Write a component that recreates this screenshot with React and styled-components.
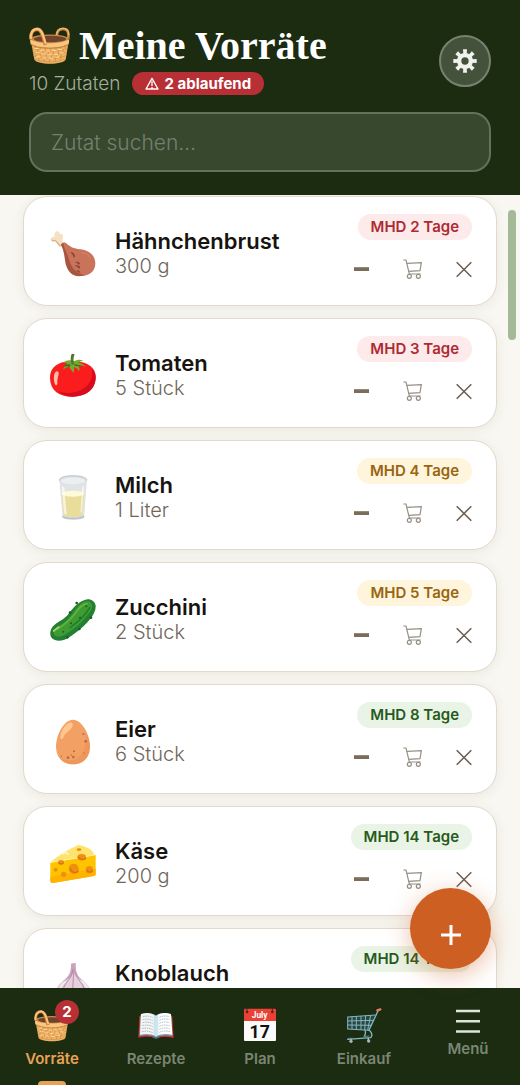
import { useState } from "react";
import styled, { createGlobalStyle } from "styled-components";

const items = [
  { name: "Hähnchenbrust", amount: "300 g", days: 2, level: "danger", icon: <Drumstick /> },
  { name: "Tomaten", amount: "5 Stück", days: 3, level: "danger", icon: <Tomato /> },
  { name: "Milch", amount: "1 Liter", days: 4, level: "warn", icon: <Milk /> },
  { name: "Zucchini", amount: "2 Stück", days: 5, level: "warn", icon: <Zucchini /> },
  { name: "Eier", amount: "6 Stück", days: 8, level: "ok", icon: <Egg /> },
  { name: "Käse", amount: "200 g", days: 14, level: "ok", icon: <Cheese /> },
  { name: "Knoblauch", amount: "3 Stück", days: 14, level: "ok", icon: <Garlic /> },
];

const tabs = [
  { label: "Vorräte", icon: <Basket width={36} height={36} />, badge: 2 },
  { label: "Rezepte", icon: <Book /> },
  { label: "Plan", icon: <Calendar /> },
  { label: "Einkauf", icon: <ShoppingCart /> },
  { label: "Menü", icon: <Burger />, small: true },
];

const levels = {
  danger: { color: "#ae2a33", background: "#fdeaea" },
  warn: { color: "#9a6410", background: "#fef5dc" },
  ok: { color: "#265a1c", background: "#e9f4e6" },
};

export default function App() {
  const [search, setSearch] = useState("");
  const [active, setActive] = useState("Vorräte");
  const visible = items.filter((item) =>
    item.name.toLowerCase().includes(search.toLowerCase())
  );

  return (
    <>
      <GlobalStyle />
      <Page>
        <Header>
          <HeaderTop>
            <div>
              <Title>
                <Basket width={42} height={38} />
                Meine Vorräte
              </Title>
              <Summary>
                10 Zutaten
                <Expiring>
                  <Warning />2 ablaufend
                </Expiring>
              </Summary>
            </div>
            <SettingsButton aria-label="Einstellungen">
              <Gear />
            </SettingsButton>
          </HeaderTop>
          <Search
            type="text"
            aria-label="Zutat suchen"
            placeholder="Zutat suchen…"
            value={search}
            onChange={(e) => setSearch(e.target.value)}
          />
        </Header>

        <Content>
          <List>
            {visible.map((item) => (
              <Item key={item.name} {...item} />
            ))}
          </List>
          <ScrollThumb />
          <AddButton aria-label="Zutat hinzufügen">
            <svg width="22" height="22" viewBox="0 0 22 22" stroke="#fff" strokeWidth="3">
              <path d="M11 1v20M1 11h20" />
            </svg>
          </AddButton>
        </Content>

        <Nav>
          {tabs.map((tab) => (
            <Tab
              key={tab.label}
              $active={active === tab.label}
              onClick={() => setActive(tab.label)}
            >
              <TabIcon $small={tab.small}>
                {tab.icon}
                {tab.badge && <Count>{tab.badge}</Count>}
              </TabIcon>
              {tab.label}
            </Tab>
          ))}
        </Nav>
      </Page>
    </>
  );
}

function Item({ name, amount, days, level, icon }) {
  return (
    <Card>
      {icon}
      <Info>
        <Name>{name}</Name>
        <Amount>{amount}</Amount>
      </Info>
      <Side>
        <Expiry $level={level}>MHD {days} Tage</Expiry>
        <Actions>
          <IconButton aria-label="Weniger">
            <svg width="15" height="20" viewBox="0 0 15 20">
              <path d="M0 8.2h15v3.8H0z" fill="#7b6c5c" />
            </svg>
          </IconButton>
          <IconButton aria-label="Auf die Einkaufsliste">
            <CartOutline />
          </IconButton>
          <IconButton aria-label="Entfernen">
            <svg width="16" height="20" viewBox="0 0 16 20" stroke="#6b5d50" strokeWidth="1.5">
              <path d="M.7 3.2l14.6 14.6M15.3 3.2L.7 17.8" />
            </svg>
          </IconButton>
        </Actions>
      </Side>
    </Card>
  );
}

function Emoji({ children }) {
  return (
    <svg width="48" height="48" viewBox="0 -1 144 144" fill="none" aria-hidden="true">
      {children}
    </svg>
  );
}

function Drumstick() {
  return (
    <Emoji>
      <path d="M34 52L18 35C9 39 2 32 7 26c2-3 6-4 10-2-2-8 0-18 8-18 6 0 8 5 7 9 6-3 12 2 10 9-1 5-4 8-2 12l9 9z" fill="#f6dfc2" />
      <path d="M7 29c2 4 8 4 12 2l17 18-3 4-15-18c-7 3-12 0-11-6z" fill="#d8b48c" />
      <path d="M36 46c4-6 9-8 15-5 12 12 24 17 42 19 30 3 46 20 46 42 0 23-17 38-42 38-20 0-34-14-41-34-6-20-6-38-20-60z" fill="#c9745a" />
      <path d="M36 46c2-3 4-5 7-6 1 16 11 29 16 47 7 28 21 44 48 51-34 9-49-8-57-34-4-18-3-36-14-58z" fill="#a8543f" />
      <path d="M65 70c5-4 14 5 13 12l-4 3c-1-7-5-11-9-15zm12 39c6-3 15-1 17 5l-3 4c-4-5-9-7-14-9zm5 14c6-2 12 2 12 8-5-1-9-4-12-8zm12-21c-4-5-10-6-16-4 4 1 8 5 11 9z" fill="#8d4534" />
      <path d="M99 70c12 1 22 8 25 18" stroke="#d8876a" strokeWidth="5" strokeLinecap="round" opacity=".5" />
    </Emoji>
  );
}

function Tomato() {
  return (
    <Emoji>
      <path d="M3 79c0-33 27-51 68-48 43-2 69 16 69 47 0 37-29 58-70 58S3 116 3 79z" fill="#fb1d1d" />
      <path d="M127 51c12 30-13 66-52 72-17 3-35 2-48-4 12 12 28 17 44 17 40 0 69-22 69-58 0-11-4-20-13-27z" fill="#d60b1d" />
      <path d="M15 74c1-12 9-17 13-12 4 6-4 15-3 34 0 6-5 8-7 3-3-7-4-16-3-25z" fill="#ffc0a8" />
      <path d="M65 27c-7-1-16 1-22 7 5 0 10 1 14 4-8 2-13 8-14 17 6-6 12-9 18-8 3 6 8 12 13 18 1-7 2-12 1-18 7 2 12 6 15 13 3-7 1-12-3-18 8 0 15 1 22 5-3-8-12-13-22-13 4-3 10-5 16-5-8-5-17-5-27 1z" fill="#72ad32" />
      <path d="M65 40c-8-2-15-1-22 7 8-3 15-3 19 0zm10-1c8-1 17 1 24 8-9-3-16-4-21-3z" fill="#406f22" />
      <path d="M68 40c-4-14-4-27 1-33l8 2c-4 8-5 19-1 30z" fill="#54752d" />
    </Emoji>
  );
}

function Milk() {
  return (
    <Emoji>
      <ellipse cx="73" cy="131" rx="34" ry="8" fill="#c5ced2" />
      <path d="M31 20l9 104c1 14 64 15 66 0l8-104z" fill="#e0e4e6" />
      <path d="M38 61l6 61c4 13 54 13 57 0l5-61z" fill="#e9dd9c" />
      <ellipse cx="72" cy="61" rx="34" ry="9" fill="#fff9d8" />
      <ellipse cx="72" cy="21" rx="41" ry="14" fill="#d5dade" />
      <ellipse cx="72" cy="23" rx="37" ry="11" fill="#eceff1" />
      <path d="M31 21c0-9 17-14 41-14s42 5 42 14" stroke="#a9b1b6" strokeWidth="2" />
      <path d="M38 39l7 77c0 6 5 8 8 8l-7-82z" fill="#fff" opacity=".65" />
      <path d="M102 39l-5 78" stroke="#fff" strokeWidth="5" opacity=".6" />
      <path d="M41 127c8 10 55 11 64-1" stroke="#9eabb2" strokeWidth="2" />
    </Emoji>
  );
}

function Zucchini() {
  return (
    <Emoji>
      <path d="M107 14c14-6 31 2 33 17 1 15-7 29-19 43-17 21-35 34-59 51-16 12-41 16-53 4-10-11-5-30 7-40 15-13 30-17 43-34 15-19 27-34 48-41z" fill="#238032" />
      <path d="M105 20c12-6 23 0 24 9 2 14-12 29-26 45-14 17-32 28-52 42-14 9-29 10-35 3-6-8 1-19 14-27 20-11 34-27 45-43 8-13 18-24 30-29z" fill="#3e9c32" />
      <path d="M114 25c-20 2-28 21-42 37-13 16-27 26-45 39" stroke="#68b03f" strokeWidth="5" strokeLinecap="round" />
      <path d="M122 37c-10 18-34 43-59 60" stroke="#247c2a" strokeWidth="5" strokeLinecap="round" />
      <path d="M14 107l15-12" stroke="#a2d76a" strokeWidth="5" strokeLinecap="round" />
      <g fill="#185f26">
        <circle cx="83" cy="23" r="4" />
        <circle cx="63" cy="52" r="4" />
        <circle cx="126" cy="67" r="4" />
        <circle cx="91" cy="101" r="4" />
        <circle cx="55" cy="126" r="4" />
        <circle cx="112" cy="33" r="3" />
        <circle cx="93" cy="67" r="3" />
        <circle cx="66" cy="84" r="3" />
        <circle cx="43" cy="109" r="3" />
      </g>
    </Emoji>
  );
}

function Egg() {
  return (
    <Emoji>
      <path d="M72 7c27 0 51 46 51 80 0 34-20 54-51 54s-51-20-51-54C21 53 45 7 72 7z" fill="#f2a063" />
      <path d="M106 41c13 42-4 83-38 88-15 2-28-2-37-10 8 15 23 22 41 22 31 0 51-20 51-54 0-15-6-32-17-46z" fill="#e98c53" opacity=".45" />
      <path d="M34 62c0-18 14-43 28-46 9-2 12 6 7 14-7 12-19 15-25 28-2 6-9 10-10 4z" fill="#ffc78f" />
      <g fill="#bc684e">
        <circle cx="103" cy="50" r="3" />
        <circle cx="110" cy="72" r="4" />
        <circle cx="75" cy="102" r="3" />
        <circle cx="105" cy="107" r="2" />
        <circle cx="57" cy="121" r="4" />
        <circle cx="73" cy="119" r="4" />
        <circle cx="67" cy="113" r="2" />
        <circle cx="37" cy="117" r="2" />
      </g>
    </Emoji>
  );
}

function Cheese() {
  return (
    <Emoji>
      <path d="M4 68c25-20 52-37 84-51 23 4 42 12 48 30z" fill="#ffe36d" />
      <path d="M4 70l136-23v58c0 3-2 4-5 5L12 131c-5 0-8-2-8-7z" fill="#ffc400" />
      <path d="M4 112l136-24v17c0 3-2 4-5 5L12 131c-5 0-8-2-8-7z" fill="#ffb300" />
      <path d="M4 69l132-22" stroke="#fff09a" strokeWidth="3" />
      <g fill="#ef8f12">
        <ellipse cx="98" cy="54" rx="13" ry="10" />
        <circle cx="74" cy="88" r="15" />
        <circle cx="121" cy="91" r="11" />
        <circle cx="44" cy="105" r="8" />
        <circle cx="20" cy="91" r="6" />
        <ellipse cx="36" cy="69" rx="9" ry="7" />
        <ellipse cx="90" cy="31" rx="7" ry="4" />
      </g>
      <path d="M88 53c4 8 17 10 23 3M64 86c1 14 17 19 25 8M113 91c3 9 14 10 18 2M29 70c3 5 11 5 15 0" stroke="#db7311" strokeWidth="4" />
      <path d="M41 45c7-7 13-7 17 1" stroke="#fff6c5" strokeWidth="5" />
    </Emoji>
  );
}

function Garlic() {
  return (
    <Emoji>
      <path d="M66 7l14-2c-1 29 4 41 25 55 24 17 30 57-1 73-19 10-48 10-66 0-29-17-21-58 3-74 20-13 26-27 25-52z" fill="#e5d1de" />
      <path d="M66 7l14-2c-1 29 4 41 25 55-20-8-27-17-31-31-5 17-14 26-33 31 20-14 26-28 25-53z" fill="#c9a3bd" />
      <path d="M71 24c-1 33-24 34-30 66M75 24c-3 35-5 60-2 110M79 33c5 25 25 30 29 61" stroke="#b58aa8" strokeWidth="3" />
      <path d="M50 61c-19 12-25 30-15 58M96 58c21 14 26 35 16 61" stroke="#fff" strokeWidth="5" opacity=".6" />
    </Emoji>
  );
}

function Basket({ width, height }) {
  return (
    <svg width={width} height={height} viewBox="0 0 120 108" fill="none" aria-hidden="true">
      <path d="M80 28c-2-15 5-23 17-23 14 0 18 10 15 28" stroke="#d18b43" strokeWidth="8" />
      <path d="M79 26c-1-14 5-23 18-23 11 0 17 7 16 20" stroke="#f3bd72" strokeWidth="3" />
      <ellipse cx="59" cy="34" rx="54" ry="13" fill="#c98a4a" />
      <ellipse cx="60" cy="34" rx="46" ry="9" fill="#6f432c" />
      <path d="M5 36c20 14 89 14 109 0l-9 56c-4 17-86 17-90 0z" fill="#f0b365" />
      <path d="M3 34c17 16 95 16 112 0l-1 13c-18 15-93 15-110 0z" fill="#f8c67c" />
      <path d="M5 49c23 15 85 15 108 0" stroke="#c58444" strokeWidth="3" />
      <path d="M8 59c24 13 80 13 103 0M10 70c25 13 74 13 99 0M12 81c24 12 71 12 95 0M15 91c22 11 67 11 88 0" stroke="#cf8b45" strokeWidth="2" />
      <path d="M18 53v9m14-5v9m15-7v9m15-9v9m15-10v9m14-12v9m12-13v9M25 65v9m15-7v9m15-7v9m15-9v9m14-10v9m13-13v9M20 75v9m14-6v9m15-6v9m15-9v9m14-10v9m14-12v9M28 87v9m15-7v9m16-8v9m16-11v9m14-13v9" stroke="#c58444" strokeWidth="2" />
      <path d="M15 61h12m3 5h14m4 2h13m4-1h14m4-3h12M18 73h12m4 4h13m5 2h13m5-1h13m5-4h11M21 85h12m5 3h13m5 1h14m5-3h12" stroke="#ffd995" strokeWidth="3" />
      <path d="M7 36C3 18 10 6 25 6c15 3 15 26 22 45" stroke="#c67f3c" strokeWidth="10" />
      <path d="M5 34C3 17 11 5 25 5c15 3 16 25 23 43" stroke="#ffc57c" strokeWidth="6" />
    </svg>
  );
}

function Book() {
  return (
    <svg width="36" height="36" viewBox="0 0 108 108" fill="none" aria-hidden="true">
      <path d="M4 25L1 89c17-3 34-4 53 2 19-6 36-5 53-1l-4-65z" fill="#c62f35" />
      <path d="M8 20L4 84c20-4 36-2 50 4 14-6 31-8 50-3l-5-65c-19-8-35-5-45 3-14-8-30-10-46-3z" fill="#7c9fb1" />
      <path d="M9 18L6 80c20-4 36-2 48 5V24C42 14 27 12 9 18z" fill="#f2f5f4" />
      <path d="M99 18l4 62c-20-4-37-2-49 5V24c11-10 28-12 45-6z" fill="#fff" />
      <path d="M47 18l7 6 7-6v62l-7 7-7-7z" fill="#b9dce9" opacity=".7" />
      <path d="M15 26c11-3 20-2 29 3M14 35c11-3 20-2 30 3M14 44c11-3 20-2 30 3M13 53c11-3 21-2 31 3M12 62c12-3 22-2 32 3M12 71c12-3 22-2 32 3M64 28c10-5 19-5 29-2M64 37c10-5 20-5 30-2M64 46c10-5 20-5 30-2M64 55c10-5 20-5 31-2M64 64c10-5 20-5 31-2M64 73c10-5 21-5 32-2" stroke="#94a3a8" strokeWidth="2" strokeDasharray="5 2" />
      <path d="M45 86c3 5 15 5 18 0" stroke="#437689" strokeWidth="5" />
    </svg>
  );
}

function Calendar() {
  return (
    <svg width="36" height="36" viewBox="0 0 108 108" aria-hidden="true">
      <path d="M6 38h96v58q0 3-3 3H9q-3 0-3-3z" fill="#fafafa" />
      <path d="M9 2h90q3 0 3 3v34H6V5q0-3 3-3z" fill="#eb4034" />
      <path d="M15 0v14M91 0v14" stroke="#482a24" strokeWidth="3" />
      <circle cx="15" cy="12" r="4" fill="#482a24" />
      <circle cx="91" cy="12" r="4" fill="#482a24" />
      <text x="53" y="29" fill="#fff" textAnchor="middle" fontFamily="Roboto" fontSize="25" fontWeight="700">
        July
      </text>
      <text x="53" y="89" fill="#111" textAnchor="middle" fontFamily="Roboto" fontSize="53" fontWeight="700">
        17
      </text>
    </svg>
  );
}

function ShoppingCart() {
  return (
    <svg width="36" height="36" viewBox="0 0 108 108" fill="none" aria-hidden="true">
      <path d="M6 27l80-5-17 45L6 63z" fill="#2b4540" />
      <path d="M5 27l83-6M5 39l78-2M5 51l73 1M5 63l65 4M5 26v38M18 26v38M31 25v39M45 24v41M59 23l-3 43M74 22l-9 44" stroke="#82b8c1" strokeWidth="3" />
      <path d="M97 7L68 68M57 66c3 9 1 15-3 20M69 66c9 8 11 17 5 23L3 94" stroke="#82b8c1" strokeWidth="4" />
      <path d="M6 91h15M53 86l17-2" stroke="#5d8791" strokeWidth="3" />
      <path d="M94 7l9-3" stroke="#ef7860" strokeWidth="7" strokeLinecap="round" />
      <path d="M15 92v8M67 90v8" stroke="#b1c8ca" strokeWidth="4" />
      <circle cx="15" cy="100" r="5" fill="#a6b7b9" />
      <circle cx="68" cy="99" r="5" fill="#a6b7b9" />
    </svg>
  );
}

function Burger() {
  return (
    <svg width="24" height="26" viewBox="0 0 24 26" stroke="#dee5d9" strokeWidth="2.6" aria-hidden="true">
      <path d="M0 3h24M0 13.2h24M0 23.5h24" />
    </svg>
  );
}

function CartOutline() {
  return (
    <svg width="19" height="20" viewBox="0 0 57 60" fill="none" stroke="#958e84" strokeWidth="3.5" aria-hidden="true">
      <path d="M1 3h8l10 42h34M12 13l43-2-4 24-34 2" />
      <circle cx="19" cy="52" r="6" />
      <circle cx="46" cy="52" r="6" />
    </svg>
  );
}

function Gear() {
  return (
    <svg width="24" height="24" viewBox="-36 -36 72 72" aria-hidden="true">
      <circle r="17.5" fill="none" stroke="#f0f3ed" strokeWidth="13" />
      {[0, 45, 90, 135, 180, 225, 270, 315].map((angle) => (
        <path key={angle} d="M-6-35H6l-1 14H-5z" fill="#f0f3ed" transform={`rotate(${angle})`} />
      ))}
    </svg>
  );
}

function Warning() {
  return (
    <svg width="14" height="13" viewBox="0 0 42 39" fill="none" stroke="#fff" strokeWidth="4" aria-hidden="true">
      <path d="M21 4L3 36h36zM21 13v14M21 30v4" strokeLinejoin="round" />
    </svg>
  );
}

const GlobalStyle = createGlobalStyle`
  * {
    box-sizing: border-box;
  }
  body {
    margin: 0;
    background-color: #f8f7f1;
    font-family: Inter, "Liberation Sans", sans-serif;
  }
  button {
    padding: 0;
    border: none;
    background: none;
    font-family: inherit;
    cursor: pointer;
  }
  svg {
    display: block;
    flex-shrink: 0;
  }
`;

const Page = styled.div`
  height: 100vh;
  display: flex;
  flex-direction: column;
`;

const Header = styled.header`
  display: flex;
  flex-direction: column;
  gap: 14px;
  padding: 23px 29px;
  background-color: #1b2c11;
`;

const HeaderTop = styled.div`
  display: flex;
  justify-content: space-between;
  align-items: center;
`;

const Title = styled.h1`
  display: flex;
  align-items: center;
  gap: 8px;
  margin: 0;
  font-family: "Liberation Serif", serif;
  font-size: 40px;
  line-height: 46px;
  font-weight: 700;
  color: white;
`;

const Summary = styled.div`
  display: flex;
  align-items: center;
  gap: 12px;
  font-size: 19px;
  line-height: 29px;
  font-weight: 300;
  color: #a5ae9f;
`;

const Expiring = styled.span`
  display: flex;
  align-items: center;
  gap: 5px;
  padding: 0 13px;
  border-radius: 12px;
  background-color: #b82f35;
  font-size: 15px;
  line-height: 23px;
  font-weight: 700;
  color: white;
`;

const SettingsButton = styled.button`
  width: 52px;
  height: 52px;
  display: flex;
  justify-content: center;
  align-items: center;
  border: 2px solid #768270;
  border-radius: 50%;
  background-color: #44523c;
`;

const Search = styled.input`
  width: 100%;
  height: 60px;
  padding: 0 20px;
  border: 2px solid #63725b;
  border-radius: 18px;
  outline: none;
  background-color: #38482f;
  font-family: inherit;
  font-size: 21px;
  font-weight: 300;
  color: white;

  &::placeholder {
    color: #74806e;
  }
`;

const Content = styled.main`
  flex: 1;
  min-height: 0;
  position: relative;
`;

const List = styled.div`
  height: 100%;
  display: flex;
  flex-direction: column;
  gap: 12px;
  padding: 1px 23px 0;
  overflow-y: auto;
  scrollbar-width: none;
`;

const Card = styled.article`
  display: flex;
  align-items: center;
  flex-shrink: 0;
  gap: 18px;
  height: 110px;
  padding: 17px 24px 14px 25px;
  border: 1px solid #e3d8ce;
  border-radius: 24px;
  background-color: white;
  box-shadow: 0 2px 12px rgba(60, 45, 20, 0.08);
`;

const Info = styled.div`
  flex: 1;
  min-width: 0;
`;

const Name = styled.div`
  font-size: 22px;
  line-height: 26px;
  font-weight: 600;
  color: #171410;
`;

const Amount = styled.div`
  font-size: 20px;
  line-height: 24px;
  font-weight: 300;
  color: #71665a;
`;

const Side = styled.div`
  align-self: flex-start;
  display: flex;
  flex-direction: column;
  align-items: flex-end;
  gap: 19px;
`;

const Expiry = styled.span`
  padding: 0 13px;
  border-radius: 13px;
  background-color: ${(props) => levels[props.$level].background};
  font-size: 15px;
  line-height: 26px;
  font-weight: 600;
  color: ${(props) => levels[props.$level].color};
`;

const Actions = styled.div`
  display: flex;
  gap: 34px;
`;

const IconButton = styled.button`
  display: flex;
  align-items: center;
`;

const ScrollThumb = styled.div`
  position: absolute;
  top: 15px;
  right: 4px;
  width: 8px;
  height: 130px;
  border-radius: 4px;
  background-color: #a3b998;
`;

const AddButton = styled.button`
  position: absolute;
  right: 29px;
  bottom: 19px;
  width: 81px;
  height: 81px;
  display: flex;
  justify-content: center;
  align-items: center;
  padding-top: 12px;
  border-radius: 50%;
  background-color: #cd5f23;
  box-shadow: 0 6px 24px rgba(205, 95, 35, 0.4);
`;

const Nav = styled.nav`
  display: flex;
  height: 97px;
  background-color: #1b2c11;
`;

const Tab = styled.button`
  flex: 1;
  display: flex;
  flex-direction: column;
  align-items: center;
  gap: 4px;
  padding-top: 20px;
  position: relative;
  font-size: 15px;
  line-height: 22px;
  font-weight: 600;
  color: ${(props) => (props.$active ? "#e9a255" : "#7a8673")};

  &::after {
    content: "";
    display: ${(props) => (props.$active ? "block" : "none")};
    position: absolute;
    bottom: 0;
    width: 28px;
    height: 4px;
    border-radius: 4px 4px 0 0;
    background-color: #e9a255;
  }
`;

const TabIcon = styled.span`
  position: relative;
  height: ${(props) => (props.$small ? "26px" : "36px")};
`;

const Count = styled.span`
  position: absolute;
  top: -8px;
  right: -9px;
  width: 24px;
  border-radius: 50%;
  background-color: #b82f35;
  font-size: 15px;
  line-height: 24px;
  font-weight: 700;
  text-align: center;
  color: white;
`;
